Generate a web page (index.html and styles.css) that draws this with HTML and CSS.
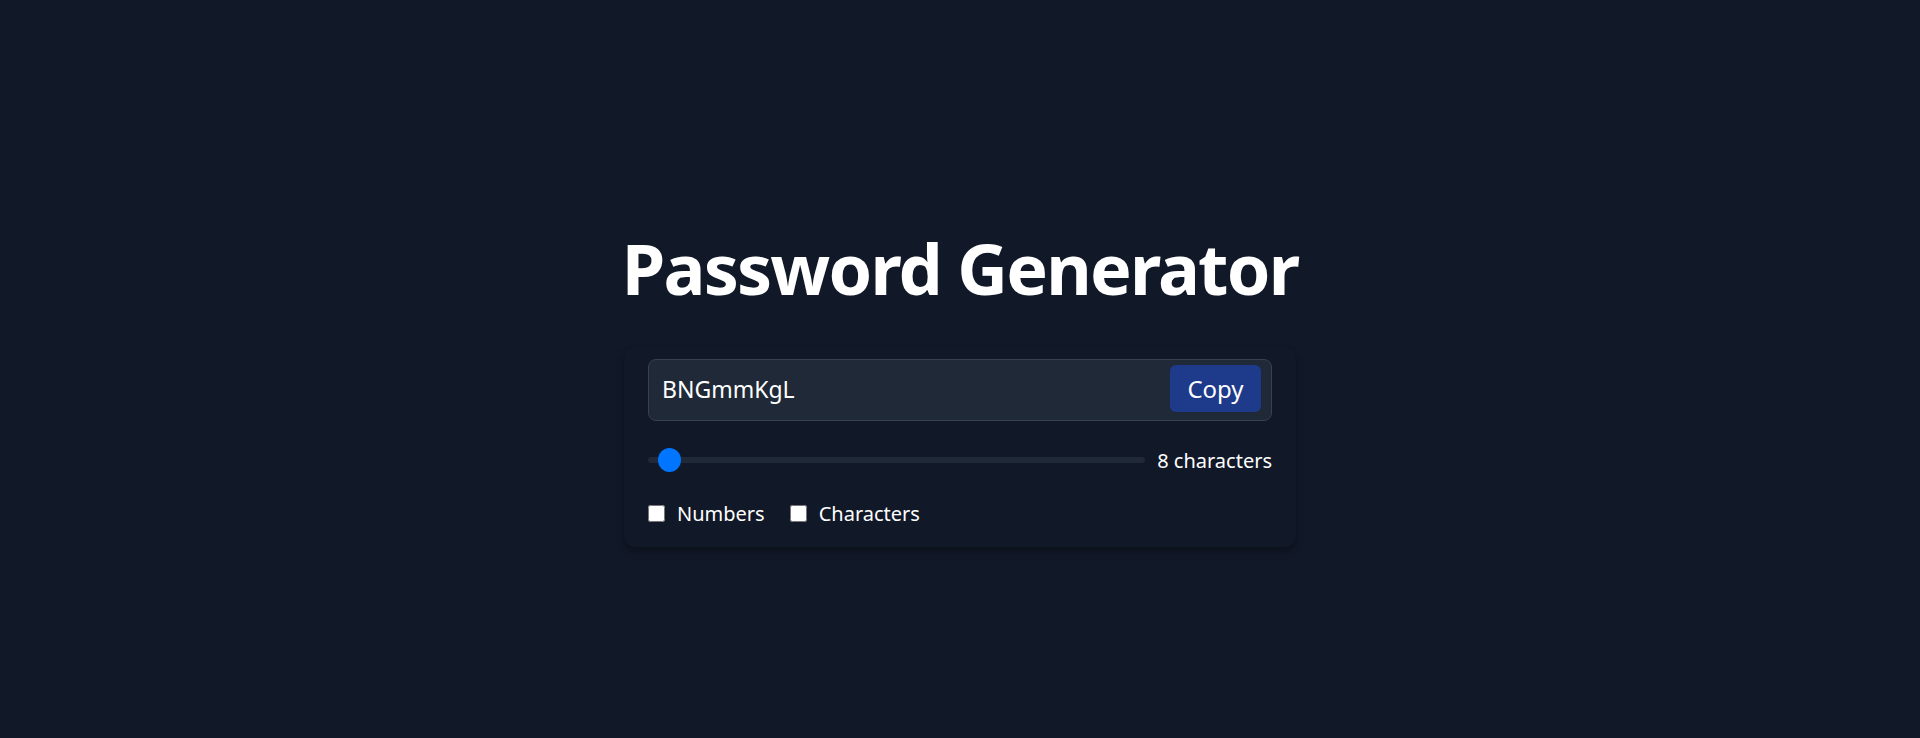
FILE: index.html
```html
<!DOCTYPE html>
<html lang="en">
<head>
<meta charset="utf-8">
<title>Password Generator</title>
<link rel="stylesheet" href="styles.css">
</head>
<body>
<main class="page">
  <h1 class="title">Password Generator</h1>
  <section class="card">
    <div class="output-row">
      <input class="password" type="text" value="BNGmmKgL" readonly>
      <button class="copy-btn" type="button">Copy</button>
    </div>
    <div class="length-row">
      <div class="range">
        <div class="range-track"></div>
        <div class="range-thumb"></div>
      </div>
      <span class="length-label">8 characters</span>
    </div>
    <div class="options-row">
      <label class="option"><input type="checkbox" class="check"><span>Numbers</span></label>
      <label class="option"><input type="checkbox" class="check"><span>Characters</span></label>
    </div>
  </section>
</main>
</body>
</html>
```

FILE: styles.css
```css
html, body {
  margin: 0;
  padding: 0;
}
body {
  background: #111827;
  color: #ffffff;
  font-family: "Noto Sans", "Open Sans", "DejaVu Sans", sans-serif;
  height: 738px;
  overflow: hidden;
}
.page {
  display: flex;
  flex-direction: column;
  align-items: center;
  padding-top: 233px;
}
.title {
  margin: 0 0 44px;
  font-size: 70px;
  line-height: 1;
  font-weight: 700;
  letter-spacing: -1.8px;
  color: #ffffff;
}
.card {
  width: 672px;
  box-sizing: border-box;
  padding: 12px 24px 19px;
  background: #111827;
  border-radius: 10px;
  box-shadow: 0 5px 8px -1px rgba(0,0,0,0.25), 0 2px 5px -2px rgba(0,0,0,0.2);
}
.output-row {
  display: flex;
  align-items: flex-start;
  height: 62px;
  box-sizing: border-box;
  padding: 5px 10px 0 0;
  background: #1f2937;
  border: 1px solid #374151;
  border-radius: 8px;
}
.password {
  flex: 1;
  min-width: 0;
  height: 48px;
  padding: 0 0 0 13px;
  margin: 0;
  border: none;
  outline: none;
  background: transparent;
  color: #ffffff;
  font: 23px "Noto Sans", "Open Sans", sans-serif;
}
.copy-btn {
  width: 91px;
  height: 47px;
  margin: 0;
  padding: 0;
  border: none;
  border-radius: 6px;
  background: #1e3a8a;
  color: #ffffff;
  font: 24px "Noto Sans", "Open Sans", sans-serif;
}
.length-row {
  display: flex;
  align-items: center;
  gap: 12px;
  height: 30px;
  margin-top: 24px;
}
.range {
  position: relative;
  flex: 1;
  height: 24px;
  display: flex;
  align-items: center;
}
.range-track {
  width: 100%;
  height: 6px;
  border-radius: 3px;
  background: #1f2937;
}
.range-thumb {
  position: absolute;
  left: 10px;
  top: 0;
  width: 23px;
  height: 24px;
  border-radius: 50%;
  background: #0075ff;
}
.length-label {
  font-size: 20px;
  white-space: nowrap;
  flex-shrink: 0;
}
.options-row {
  display: flex;
  align-items: center;
  gap: 25px;
  height: 30px;
  margin-top: 23px;
}
.option {
  display: flex;
  align-items: center;
  gap: 12px;
  font-size: 20px;
}
.check {
  width: 17px;
  height: 17px;
  margin: 0;
}
```
